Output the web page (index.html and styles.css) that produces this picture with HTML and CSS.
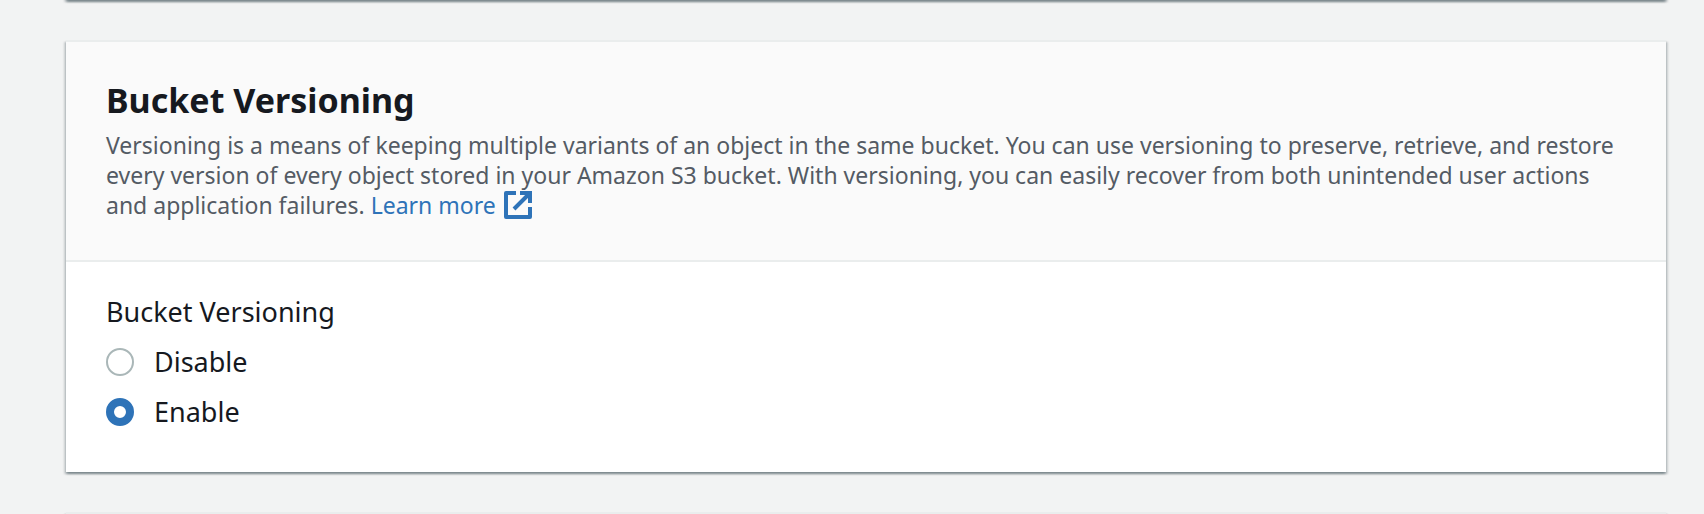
FILE: index.html
```html
<!DOCTYPE html>
<html lang="en">
<head>
<meta charset="utf-8">
<title>Bucket Versioning</title>
<link rel="stylesheet" href="styles.css">
</head>
<body>
<main class="page">
  <div class="card card-previous"></div>
  <section class="card">
    <header class="card-header">
      <h2 class="card-title">Bucket Versioning</h2>
      <p class="card-description">Versioning is a means of keeping multiple variants of an object in the same bucket. You can use versioning to preserve, retrieve, and restore every version of every object stored in your Amazon S3 bucket. With versioning, you can easily recover from both unintended user actions and application failures. <a class="link" href="#learn-more">Learn more<svg class="link-icon" viewBox="0 0 28 28" aria-hidden="true"><path stroke-linejoin="round" d="M12 2H2v24h24V16"/><path d="M16 2h10v10M26 2L10 18"/></svg></a></p>
    </header>
    <fieldset class="card-body">
      <legend class="field-label">Bucket Versioning</legend>
      <label class="option"><input class="radio" type="radio" name="versioning" value="disable">Disable</label>
      <label class="option"><input class="radio" type="radio" name="versioning" value="enable" checked>Enable</label>
    </fieldset>
  </section>
  <div class="card"></div>
</main>
</body>
</html>
```
FILE: styles.css
```css
* {
  box-sizing: border-box;
}

body {
  margin: 0;
  background: #f2f3f3;
  color: #16191f;
  font-family: "Noto Sans", "Open Sans", sans-serif;
}

.page {
  display: flex;
  flex-direction: column;
  gap: 40px;
  padding: 0 38px 0 66px;
}

.card {
  background: #fff;
  border-top: 2px solid #eaeded;
  box-shadow:
    0 2px 2px 0 rgba(0, 28, 36, 0.3),
    2px 2px 2px 0 rgba(0, 28, 36, 0.15),
    -2px 2px 2px 0 rgba(0, 28, 36, 0.15);
}

.card-previous {
  height: 20px;
  margin-top: -20px;
}

.card-header {
  padding: 36px 40px 40px;
  background: #fafafa;
  border-bottom: 2px solid #eaeded;
}

.card-title {
  margin: 0;
  font-size: 34px;
  line-height: 44px;
}

.card-description {
  margin: 8px 0 0;
  color: #545b64;
  font-size: 23px;
  line-height: 30px;
}

.link {
  color: #2e73b8;
  text-decoration: none;
  white-space: nowrap;
}

.link-icon {
  width: 28px;
  height: 28px;
  margin-left: 8px;
  vertical-align: -5px;
  fill: none;
  stroke: currentColor;
  stroke-width: 4;
}

.card-body {
  display: flex;
  flex-direction: column;
  gap: 10px;
  margin: 0;
  padding: 30px 40px 40px;
  border: 0;
}

.field-label {
  float: left;
  padding: 0;
  font-size: 27px;
  line-height: 40px;
}

.option {
  display: flex;
  align-items: center;
  gap: 20px;
  font-size: 27px;
  line-height: 40px;
}

.radio {
  appearance: none;
  width: 28px;
  height: 28px;
  margin: 0;
  background: #fff;
  border: 2px solid #aab7b8;
  border-radius: 50%;
}

.radio:checked {
  border: 8px solid #2e73b8;
}
```
